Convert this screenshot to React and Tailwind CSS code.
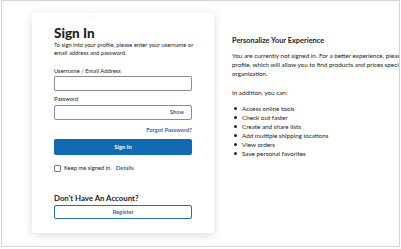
const bullets = [
  "Access online tools",
  "Check out faster",
  "Create and share lists",
  "Add multiple shipping locations",
  "View orders",
  "Save personal favorites",
];

const App = () => {
  return (
    <div className="w-[401px] h-[249px] bg-white font-['Lato','Liberation_Sans',sans-serif] text-[#222]">
      <div className="ml-px w-[399px] h-[247px] border border-[#d4d4d4] flex overflow-hidden">
        {/* Sign in card */}
        <div className="ml-[30px] mt-3 w-[182px] h-[220px] shrink-0 bg-white rounded-[3px] shadow-[0_2px_10px_rgba(0,0,0,0.15)] px-[22px] pt-3">
          <h1 className="text-[13.5px] leading-[16px] font-black">Sign In</h1>
          <p className="text-[5.8px] leading-[8px] whitespace-nowrap">
            <span className="block">To sign into your profile, please enter your username or</span>
            <span className="block">email address and password.</span>
          </p>

          <label className="block mt-[10px] text-[5.8px] leading-[8px]">Username / Email Address</label>
          <input
            type="text"
            className="block mt-px w-full h-[15px] border border-[#8c8c8c] rounded-[2px] outline-none"
          />

          <label className="block mt-1 text-[5.8px] leading-[8px]">Password</label>
          <div className="mt-[2px] h-[15px] border border-[#8c8c8c] rounded-[2px] flex items-center justify-end pr-[7px]">
            <span className="text-[5.8px] font-bold text-[#1f6fb2]">Show</span>
          </div>

          <div className="mt-[6px] text-right text-[5.8px] leading-[8px] font-bold text-[#1f6fb2]">
            Forgot Password?
          </div>

          <button className="block mt-[5px] w-full h-4 rounded-[2px] bg-[#126ab0] text-white text-[5.8px] font-bold">
            Sign In
          </button>

          <div className="mt-[9px] flex items-center h-2">
            <span className="w-[7px] h-[7px] border border-[#777] rounded-[1px] bg-white" />
            <span className="ml-[3px] text-[5.8px] leading-[8px]">Keep me signed in.</span>
            <span className="ml-[4px] text-[5.8px] leading-[8px] font-bold text-[#1f6fb2]">Details</span>
          </div>

          <h2 className="mt-[21px] text-[7.8px] leading-[10px] font-bold">Don't Have An Account?</h2>
          <button className="block mt-[2px] w-full h-[14px] rounded-[2px] border border-[#1f6fb2] text-[#1f6fb2] text-[5.8px] font-bold">
            Register
          </button>
        </div>

        {/* Personalize panel */}
        <div className="ml-[18px] pt-[35px] min-w-0 text-[6.3px] leading-[9px]">
          <h3 className="font-bold text-[7.4px] leading-[9px]">Personalize Your Experience</h3>
          <div className="mt-[6px] whitespace-nowrap">
            <div>You are currently not signed in. For a better experience, please sign in to your</div>
            <div>profile, which will allow you to find products and prices specific to your</div>
            <div>organization.</div>
          </div>
          <div className="mt-[10px]">In addition, you can:</div>
          <ul className="mt-[7px]">
            {bullets.map((b) => (
              <li key={b} className="flex items-center">
                <span className="ml-[2px] w-[3px] h-[3px] rounded-full bg-[#222]" />
                <span className="ml-[5px]">{b}</span>
              </li>
            ))}
          </ul>
        </div>
      </div>
    </div>
  );
};

export default App;
